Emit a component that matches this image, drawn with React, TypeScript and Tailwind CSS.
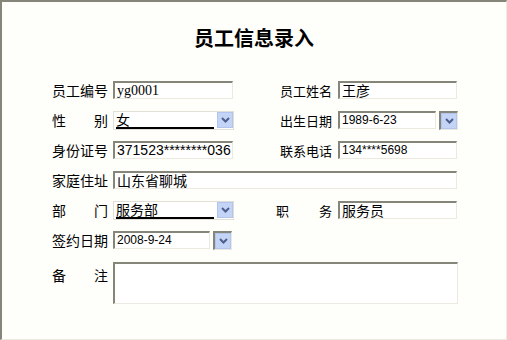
import React from 'react'

const CJK = "font-['Noto_Sans_CJK_SC',sans-serif]"
const SANS = "font-['Liberation_Sans',sans-serif]"

function Label({ text, wide = true }: { text: string; wide?: boolean }) {
  const chars = text.split('')
  return (
    <div className={`${CJK} ${wide ? 'text-[14px]' : 'text-[13px]'} w-[56px] flex justify-between leading-none text-black shrink-0`}>
      {chars.length === 2 ? (
        <>
          <span>{chars[0]}</span>
          <span>{chars[1]}</span>
        </>
      ) : (
        <span className="ml-auto">{text}</span>
      )}
    </div>
  )
}

const sunken =
  'border-t-2 border-l-2 border-b border-r border-t-[#85857a] border-l-[#85857a] border-b-[#eceae0] border-r-[#eceae0]'

function Box({ value, width, font = CJK, size = 'text-[14px]' }: { value: string; width: string; font?: string; size?: string }) {
  return (
    <div className={`${width} h-[18px] bg-white ${sunken} overflow-hidden whitespace-nowrap flex items-center pl-[2px] ${font} ${size} leading-[15px] text-black shrink-0`}>
      {value}
    </div>
  )
}

function Chevron() {
  return (
    <svg width="9" height="6" viewBox="0 0 9 6">
      <path d="M1 1 L4.5 4.5 L8 1" fill="none" stroke="#4a5f8c" strokeWidth="2" />
    </svg>
  )
}

function DropBtn() {
  return (
    <div className="w-[16px] h-[16px] bg-[#c4d4f6] border border-[#b2c5ef] flex items-center justify-center shrink-0">
      <Chevron />
    </div>
  )
}

function Select({ value }: { value: string }) {
  return (
    <div className="w-[121px] h-[19px] bg-white border border-[#e2e0d6] flex items-center shrink-0">
      <div className={`flex-1 h-full pl-[2px] pr-[2px] flex flex-col justify-center ${CJK} text-[14px] leading-[14px] text-black`}>
        <span>{value}</span>
        <div className="h-[2px] bg-black mt-[1px] mr-[1px]" />
      </div>
      <DropBtn />
    </div>
  )
}

function DateField({ value, width }: { value: string; width: string }) {
  return (
    <div className="flex items-center gap-[3px] shrink-0">
      <Box value={value} width={width} font={SANS} size="text-[12px]" />
      <div className={`h-[19px] ${sunken} flex items-center`}>
        <DropBtn />
      </div>
    </div>
  )
}

export default function App() {
  return (
    <div className={`w-[507px] h-[340px] bg-[#fefefb] ${sunken} border-b-[#ebe9df] border-r-[#ebe9df] box-border`}>
      <div className={`pt-[23px] h-[73px] text-center ${CJK} text-[20px] font-bold leading-[26px] text-black`}>
        员工信息录入
      </div>

      <div className="pl-[50px] flex flex-col">
        {/* row 1 */}
        <div className="h-[30px] flex items-center">
          <Label text="员工编号" />
          <div className="ml-[5px]">
            <Box value="yg0001" width="w-[120px]" font="font-['Liberation_Serif',serif]" size="text-[14px]" />
          </div>
          <div className="w-[105px] flex justify-end pr-[6px]">
            <Label text="员工姓名" wide={false} />
          </div>
          <Box value="王彦" width="w-[119px]" />
        </div>

        {/* row 2 */}
        <div className="h-[30px] flex items-center">
          <Label text="性别" />
          <div className="ml-[5px]">
            <Select value="女" />
          </div>
          <div className="w-[104px] flex justify-end pr-[6px]">
            <Label text="出生日期" wide={false} />
          </div>
          <DateField value="1989-6-23" width="w-[98px]" />
        </div>

        {/* row 3 */}
        <div className="h-[30px] flex items-center">
          <Label text="身份证号" />
          <div className="ml-[5px]">
            <Box value="371523********036" width="w-[120px]" font={SANS} size="text-[14px]" />
          </div>
          <div className="w-[105px] flex justify-end pr-[6px]">
            <Label text="联系电话" wide={false} />
          </div>
          <Box value="134****5698" width="w-[119px]" font={SANS} size="text-[12px]" />
        </div>

        {/* row 4 */}
        <div className="h-[30px] flex items-center">
          <Label text="家庭住址" />
          <div className="ml-[5px]">
            <Box value="山东省聊城" width="w-[344px]" />
          </div>
        </div>

        {/* row 5 */}
        <div className="h-[30px] flex items-center">
          <Label text="部门" />
          <div className="ml-[5px]">
            <Select value="服务部" />
          </div>
          <div className="w-[104px] flex justify-end pr-[6px]">
            <Label text="职务" wide={false} />
          </div>
          <Box value="服务员" width="w-[119px]" />
        </div>

        {/* row 6 */}
        <div className="h-[30px] flex items-center">
          <Label text="签约日期" />
          <div className="ml-[5px]">
            <DateField value="2008-9-24" width="w-[97px]" />
          </div>
        </div>

        {/* row 7 */}
        <div className="flex items-start pt-[7px]">
          <div className="pt-[6px]">
            <Label text="备注" />
          </div>
          <div className={`ml-[5px] w-[345px] h-[42px] bg-white ${sunken}`} />
        </div>
      </div>
    </div>
  )
}
